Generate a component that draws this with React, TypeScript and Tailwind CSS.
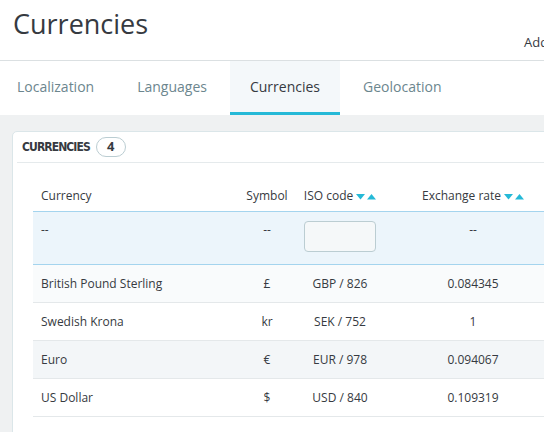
import React from "react";

const rows = [
  { name: "British Pound Sterling", symbol: "£", iso: "GBP / 826", rate: "0.084345", bg: "bg-[#f9fbfc]" },
  { name: "Swedish Krona", symbol: "kr", iso: "SEK / 752", rate: "1", bg: "bg-white" },
  { name: "Euro", symbol: "€", iso: "EUR / 978", rate: "0.094067", bg: "bg-[#f3f6f8]" },
  { name: "US Dollar", symbol: "$", iso: "USD / 840", rate: "0.109319", bg: "bg-white" },
];

function SortArrows() {
  return (
    <span className="inline-flex items-center gap-[2px] ml-[3px]">
      <svg width="9" height="6" viewBox="0 0 9 6">
        <path d="M0 0 H9 L4.5 5.5 Z" fill="#25b9d7" />
      </svg>
      <svg width="9" height="6" viewBox="0 0 9 6">
        <path d="M0 5.5 H9 L4.5 0 Z" fill="#25b9d7" />
      </svg>
    </span>
  );
}

export default function App() {
  return (
    <div className="w-full h-[432px] overflow-hidden bg-[#eff1f2] text-[#363a41]" style={{ fontFamily: '"Open Sans", sans-serif' }}>
      {/* Header */}
      <div className="bg-white">
        <div className="flex h-[60px] whitespace-nowrap overflow-hidden">
          <h1 className="w-[524px] shrink-0 pl-[13px] pt-[5px] text-[27px] leading-[37px] font-normal">Currencies</h1>
          <div className="pt-[32px] text-[13px] leading-[20px]">Add new currency</div>
        </div>

        {/* Tabs */}
        <div className="border-t border-[#dbe0e2] h-[55px]">
          <nav className="flex gap-[3px] -ml-[3px] h-full text-[14px]">
            {["Localization", "Languages", "Currencies", "Geolocation"].map((t) => {
              const active = t === "Currencies";
              return (
                <div
                  key={t}
                  className={
                    active
                      ? "px-[20px] flex items-center border-b-[3px] border-[#25b9d7] bg-[#f4f8fa] text-[#363a41]"
                      : "px-[20px] flex items-center border-b-[3px] border-transparent text-[#6c868e]"
                  }
                >
                  {t}
                </div>
              );
            })}
          </nav>
        </div>
      </div>

      {/* Panel */}
      <div className="pl-[12px] pt-[16px]">
        <div className="w-[600px] h-[400px] bg-white border border-[#dbe6e9] rounded-tl-[5px] pl-[4px]">
          <div className="flex items-center h-[31px] pl-[5px] border-b border-[#e5eaec]">
            <span
              className="text-[12px] font-bold tracking-[-0.9px] text-[#363a41] uppercase"
              style={{ fontFamily: '"DejaVu Sans Condensed", sans-serif' }}
            >
              Currencies
            </span>
            <span className="ml-[6px] h-[20px] w-[30px] flex items-center justify-center rounded-full border border-[#bbcdd2] text-[13px] font-bold">
              4
            </span>
          </div>

          <div className="pl-[16px] pt-[12px] text-[12px]">
            <table className="table-fixed border-collapse w-[560px]">
              <colgroup>
                <col className="w-[207px]" />
                <col className="w-[54px]" />
                <col className="w-[92px]" />
                <col className="w-[174px]" />
                <col />
              </colgroup>
              <thead>
                <tr className="h-[36px]">
                  <th className="text-left font-normal pl-[8px] align-bottom pb-[6px]">Currency</th>
                  <th className="text-center font-normal align-bottom pb-[6px]">Symbol</th>
                  <th className="text-center font-normal whitespace-nowrap align-bottom pb-[6px]">
                    ISO code
                    <SortArrows />
                  </th>
                  <th className="text-center font-normal whitespace-nowrap align-bottom pb-[6px]">
                    Exchange rate
                    <SortArrows />
                  </th>
                  <th />
                </tr>
                <tr className="h-[53px] bg-[#ecf5fb] border-y border-[#a4d4ee]">
                  <td className="pl-[8px] align-top pt-[9px]">--</td>
                  <td className="text-center align-top pt-[9px]">--</td>
                  <td className="text-center align-top pt-[9px]">
                    <div className="mx-auto w-[72px] h-[31px] rounded-[4px] border border-[#bbcdd2] bg-[#f5f8f9]" />
                  </td>
                  <td className="text-center align-top pt-[9px]">--</td>
                  <td />
                </tr>
              </thead>
              <tbody>
                {rows.map((r) => (
                  <tr key={r.name} className={`h-[38px] border-b border-[#e4e8ea] ${r.bg}`}>
                    <td className="pl-[8px] pt-[1px]">{r.name}</td>
                    <td className="text-center pt-[1px]">{r.symbol}</td>
                    <td className="text-center pt-[1px]">{r.iso}</td>
                    <td className="text-center pt-[1px]">{r.rate}</td>
                    <td />
                  </tr>
                ))}
              </tbody>
            </table>
          </div>
        </div>
      </div>
    </div>
  );
}
